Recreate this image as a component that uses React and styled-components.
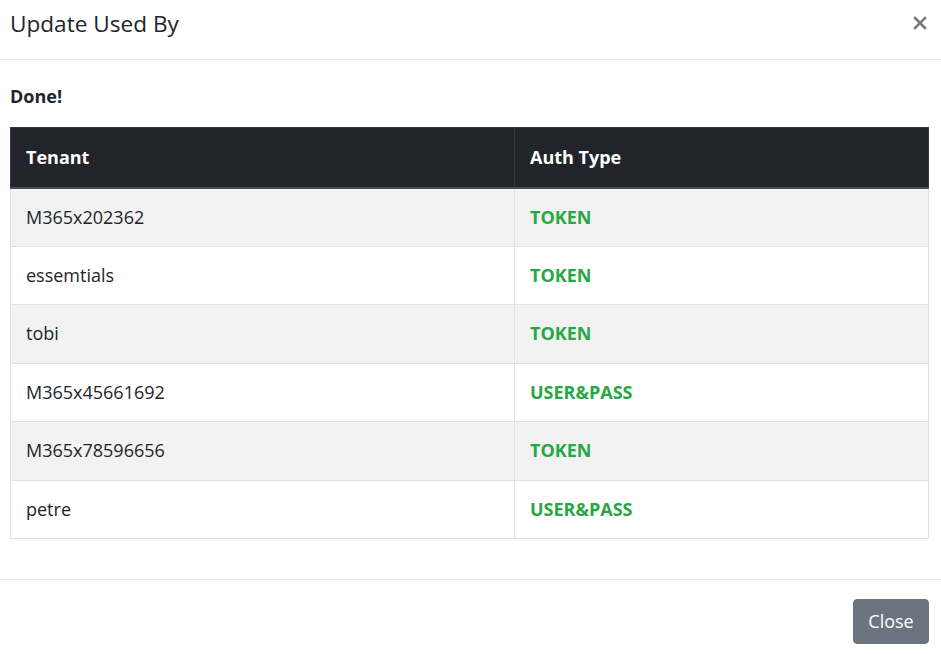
import React from "react";
import styled, { createGlobalStyle } from "styled-components";

const GlobalStyle = createGlobalStyle`
  html, body {
    margin: 0;
    padding: 0;
    background: #fff;
  }
  body {
    font-family: "Open Sans", "Noto Sans", sans-serif;
    color: #212529;
  }
`;

const rows = [
  { tenant: "M365x202362", auth: "TOKEN" },
  { tenant: "essemtials", auth: "TOKEN" },
  { tenant: "tobi", auth: "TOKEN" },
  { tenant: "M365x45661692", auth: "USER&PASS" },
  { tenant: "M365x78596656", auth: "TOKEN" },
  { tenant: "petre", auth: "USER&PASS" },
];

function App() {
  return (
    <Modal>
      <GlobalStyle />
      <Header>
        <Title>Update Used By</Title>
        <CloseX aria-label="Close">
          <svg width="14" height="14" viewBox="0 0 14 14">
            <path d="M2 2 L12 12 M12 2 L2 12" stroke="#7a7a7a" strokeWidth="2.6" strokeLinecap="square" />
          </svg>
        </CloseX>
      </Header>
      <Body>
        <Status>Done!</Status>
        <Table>
          <thead>
            <tr>
              <Th $first>Tenant</Th>
              <Th>Auth Type</Th>
            </tr>
          </thead>
          <tbody>
            {rows.map((r, i) => (
              <Row key={i} $striped={i % 2 === 0}>
                <Td>{r.tenant}</Td>
                <AuthCell>{r.auth}</AuthCell>
              </Row>
            ))}
          </tbody>
        </Table>
      </Body>
      <Footer>
        <Button>Close</Button>
      </Footer>
    </Modal>
  );
}

const Modal = styled.div`
  width: 941px;
  min-height: 654px;
  display: flex;
  flex-direction: column;
  background: #fff;
`;

const Header = styled.div`
  display: flex;
  align-items: center;
  justify-content: space-between;
  height: 59px;
  padding: 0 14px 0 10px;
  border-bottom: 1px solid #e9ecef;
  box-sizing: content-box;
`;

const Title = styled.h5`
  margin: 0;
  font-size: 22.6px;
  font-weight: 400;
  line-height: 1.2;
  position: relative;
  top: -6px;
`;

const CloseX = styled.button`
  border: 0;
  background: transparent;
  padding: 0;
  display: flex;
  position: relative;
  top: -7px;
  cursor: pointer;
`;

const Body = styled.div`
  padding: 23px 12px 40px 10px;
`;

const Status = styled.div`
  font-weight: 700;
  font-size: 18px;
  line-height: 27px;
  margin-bottom: 17px;
`;

const Table = styled.table`
  width: 919px;
  border-collapse: collapse;
  font-size: 18px;
`;

const Th = styled.th`
  background: #212529;
  color: #fff;
  text-align: left;
  font-weight: 700;
  height: 60px;
  padding: 0 15px;
  box-sizing: border-box;
  line-height: 27px;
  border: 1px solid #32383e;
  border-bottom: 2px solid #454d55;
  width: ${(p) => (p.$first ? "504px" : "auto")};
`;

const Row = styled.tr`
  background: ${(p) => (p.$striped ? "#f2f2f2" : "#fff")};
`;

const Td = styled.td`
  height: 58.5px;
  padding: 0 15px;
  border: 1px solid #dee2e6;
  line-height: 27px;
  box-sizing: border-box;
`;

const AuthCell = styled(Td)`
  color: #28a745;
  font-weight: 700;
`;

const Footer = styled.div`
  display: flex;
  justify-content: flex-end;
  border-top: 1px solid #e9ecef;
  padding: 19px 12px 11px;
`;

const Button = styled.button`
  width: 76px;
  height: 45px;
  background: #6c757d;
  color: #fff;
  border: 1px solid #6c757d;
  border-radius: 4px;
  font-family: "Open Sans", "Noto Sans", sans-serif;
  font-size: 18px;
  line-height: 1.5;
  padding: 0;
`;

export default App;
